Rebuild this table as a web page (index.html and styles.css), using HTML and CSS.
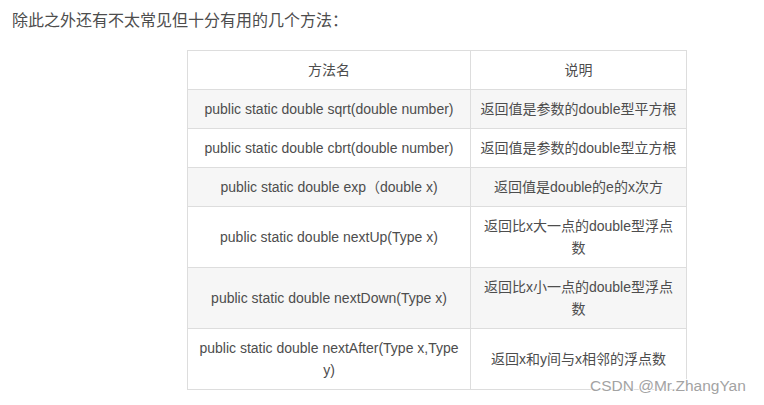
FILE: index.html
```html
<!DOCTYPE html>
<html lang="zh">
<head>
<meta charset="utf-8">
<link rel="stylesheet" href="styles.css">
</head>
<body>
<div class="article">
  <p class="intro">除此之外还有不太常见但十分有用的几个方法：</p>
  <table class="methods">
    <thead>
      <tr><th class="c1">方法名</th><th class="c2">说明</th></tr>
    </thead>
    <tbody>
      <tr><td>public static double sqrt(double number)</td><td>返回值是参数的double型平方根</td></tr>
      <tr><td>public static double cbrt(double number)</td><td>返回值是参数的double型立方根</td></tr>
      <tr><td>public static double exp（double x)</td><td>返回值是double的e的x次方</td></tr>
      <tr><td>public static double nextUp(Type x)</td><td>返回比x大一点的double型浮点数</td></tr>
      <tr><td>public static double nextDown(Type x)</td><td>返回比x小一点的double型浮点数</td></tr>
      <tr><td>public static double nextAfter(Type x,Type y)</td><td>返回x和y间与x相邻的浮点数</td></tr>
    </tbody>
  </table>
  <div class="watermark">CSDN @Mr.ZhangYan</div>
</div>
</body>
</html>
```
FILE: styles.css
```css
html, body {
  margin: 0;
  padding: 0;
  background: #ffffff;
}
body {
  font-family: "Liberation Sans", Arial, "Noto Sans CJK SC", sans-serif;
  color: #4d4d4d;
}
.article {
  position: relative;
  width: 764px;
  height: 405px;
  overflow: hidden;
}
.intro {
  margin: 0;
  padding: 9px 0 0 12px;
  font-size: 16px;
  line-height: 24px;
  height: 50px;
  box-sizing: border-box;
}
.methods {
  margin: 0 0 0 187px;
  border-collapse: collapse;
  font-size: 14px;
  line-height: 22px;
  table-layout: fixed;
  width: 500px;
}
.methods th,
.methods td {
  border: 1px solid #dddddd;
  padding: 8px;
  text-align: center;
  vertical-align: middle;
  font-weight: normal;
}
.methods .c1 { width: 266px; }
.methods .c2 { width: 199px; }
.methods tbody tr:nth-child(odd) {
  background: #f6f6f6;
}
.watermark {
  position: absolute;
  left: 590px;
  top: 375px;
  font-size: 15.5px;
  line-height: 22px;
  color: #a3a3a3;
  text-shadow: 1px 0 #fff, -1px 0 #fff, 0 1px #fff, 0 -1px #fff;
  white-space: nowrap;
}
```
